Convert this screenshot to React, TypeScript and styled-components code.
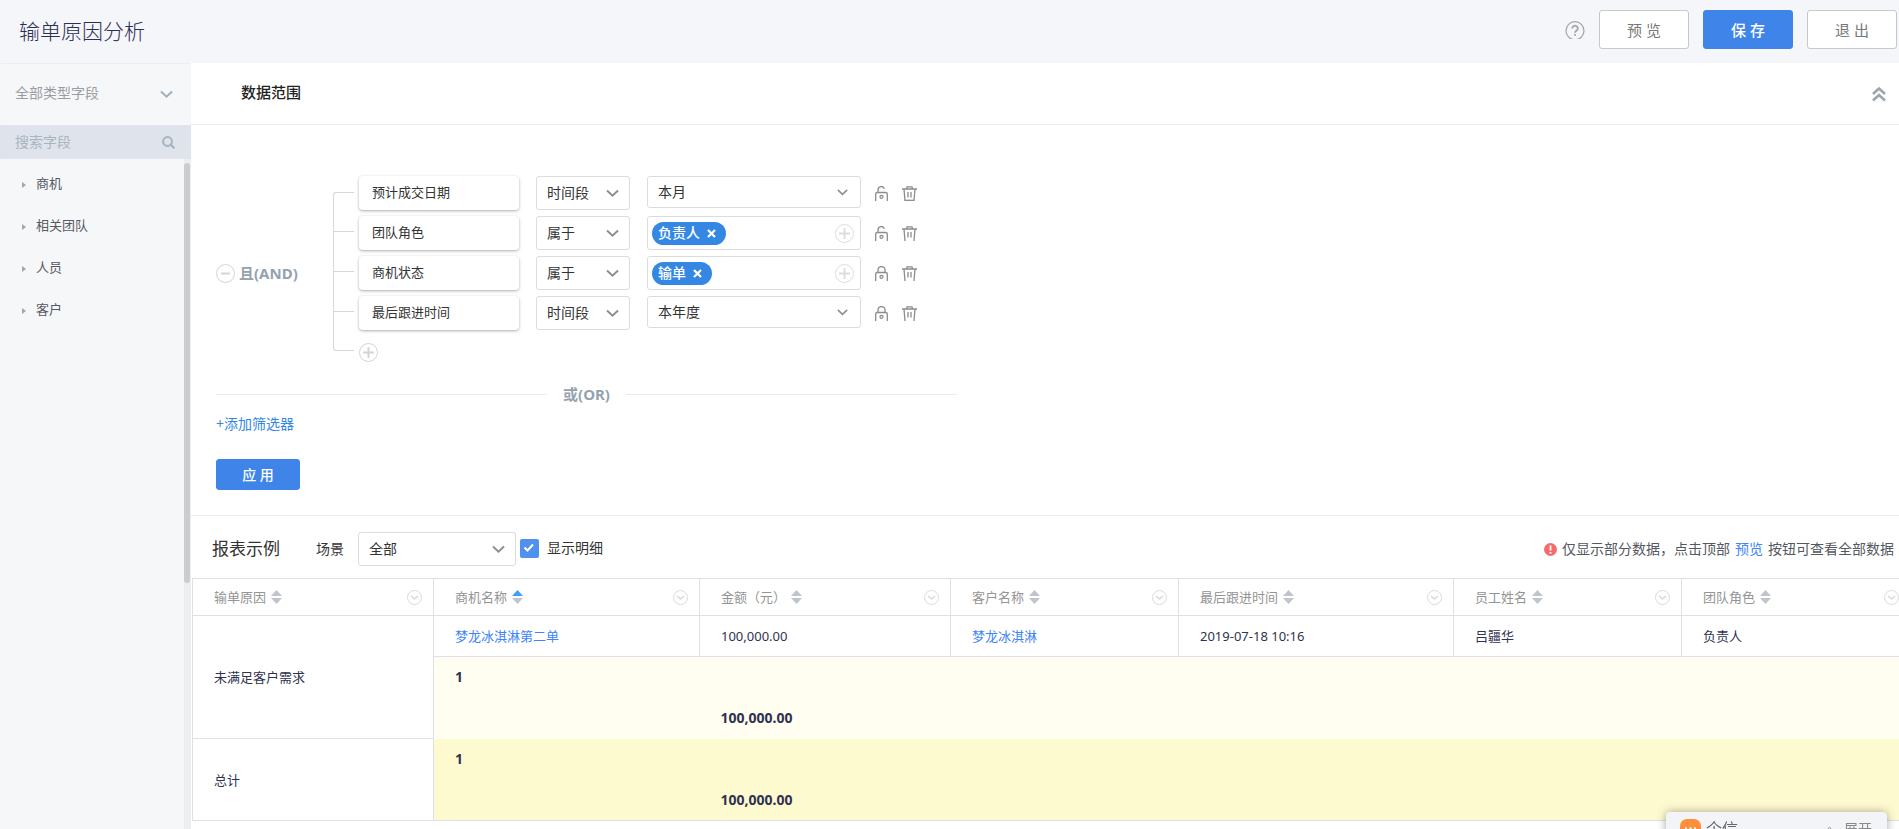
import React from 'react';
import styled, { createGlobalStyle, css } from 'styled-components';

const Global = createGlobalStyle`
  *, *::before, *::after { box-sizing: border-box; }
  body {
    margin: 0;
    background: #fff;
    overflow: hidden;
    color: #333;
    font: 14px/20px "Noto Sans", "Noto Sans CJK SC", sans-serif;
  }
  button, input, select { font: inherit; color: inherit; margin: 0; }
  button { cursor: pointer; }
  a { text-decoration: none; }
`;

const Page = styled.div`
  display: flex;
  flex-direction: column;
  min-height: 100vh;
`;

const Header = styled.header`
  display: flex;
  align-items: center;
  height: 63px;
  padding: 0 2px 4px 19px;
  background: #f5f6fa;
`;

const PageTitle = styled.h1`
  flex: 1;
  margin: 0;
  padding-top: 2px;
  font-size: 21px;
  line-height: 28px;
  font-weight: 300;
  color: #2b2f55;
`;

const PlainButton = styled.button`
  display: inline-flex;
  align-items: center;
  justify-content: center;
  padding: 0;
  border: 0;
  background: none;
`;

const HelpButton = styled(PlainButton)`
  margin: 1px 14px 0 0;
`;

const HeaderActions = styled.div`
  display: flex;
  gap: 14px;
`;

const ActionButton = styled.button<{ $primary?: boolean }>`
  width: 90px;
  height: 39px;
  padding: 0;
  border: 1px solid ${p => (p.$primary ? '#3f84e9' : '#c9c9c9')};
  border-radius: 3px;
  background: ${p => (p.$primary ? '#3f84e9' : '#fff')};
  color: ${p => (p.$primary ? '#fff' : '#777')};
  font-size: 15px;
  font-weight: ${p => (p.$primary ? 500 : 400)};
`;

const Body = styled.div`
  display: flex;
  flex: 1;
`;

const Sidebar = styled.aside`
  display: flex;
  flex-direction: column;
  flex: none;
  width: 191px;
  background: #f6f7f9;
  box-shadow: inset 0 1px 1px #eceef1;
`;

const SelectWrap = styled.span<{ $width?: number; $inset: number }>`
  position: relative;
  display: flex;
  flex: none;
  width: ${p => (p.$width ? `${p.$width}px` : '100%')};
  svg {
    position: absolute;
    right: ${p => p.$inset}px;
    top: 50%;
    transform: translateY(-50%);
    pointer-events: none;
  }
`;

const SelectBox = styled.select<{ $height?: number }>`
  appearance: none;
  width: 100%;
  height: ${p => p.$height ?? 34}px;
  padding: 0 30px 0 10px;
  border: 1px solid #dcdcdc;
  border-radius: 3px;
  background: #fff;
  outline: 0;
`;

const TypeSelect = styled(SelectBox)`
  height: 62px;
  padding: 0 30px 2px 15px;
  border: 0;
  background: transparent;
  color: #999da3;
`;

const SearchBar = styled.label`
  display: flex;
  align-items: center;
  height: 34px;
  padding: 0 16px 0 15px;
  background: #dfe4ec;
`;

const SearchInput = styled.input`
  flex: 1;
  min-width: 0;
  padding: 0;
  border: 0;
  outline: 0;
  background: transparent;
  &::placeholder { color: #a9b4c0; opacity: 1; }
`;

const TreeArea = styled.div`
  display: flex;
  flex: 1;
`;

const Tree = styled.ul`
  flex: 1;
  margin: 0;
  padding: 3px 0 0;
  list-style: none;
`;

const TreeItem = styled(PlainButton)`
  justify-content: flex-start;
  width: 100%;
  height: 42px;
  padding: 0 0 1px 22px;
  gap: 10px;
  font-size: 13px;
  color: #555a62;
  svg { margin-top: 4px; }
`;

const ScrollTrack = styled.div`
  width: 7px;
  padding-top: 4px;
  background: #eeeeee;
`;

const ScrollThumb = styled.div`
  width: 6px;
  height: 420px;
  border-radius: 3px;
  background: #cdcdcd;
`;

const Main = styled.main`
  flex: 1;
  min-width: 0;
  overflow: hidden;
`;

const PanelHead = styled.div`
  display: flex;
  align-items: center;
  justify-content: space-between;
  height: 62px;
  padding: 0 13px 4px 50px;
  border-bottom: 1px solid #ebebeb;
`;

const PanelTitle = styled.h2`
  margin: 0;
  font-size: 15px;
  line-height: 22px;
  font-weight: 500;
  color: #222;
`;

const CollapseButton = styled(PlainButton)`
  padding-top: 4px;
`;

const Filters = styled.section`
  padding: 51px 25px 25px;
  border-bottom: 1px solid #ebebeb;
`;

const FilterGroup = styled.div`
  display: flex;
  align-items: center;
`;

const AndLabel = styled.div`
  display: flex;
  align-items: center;
  gap: 4px;
  width: 117px;
  padding-top: 8px;
`;

const LogicText = styled.span`
  font-size: 15px;
  line-height: 20px;
  font-weight: 700;
  color: #94a2b0;
`;

const Bracket = styled.div`
  align-self: stretch;
  width: 21px;
  margin: 16px 5px 11px 0;
  border: 1px solid #d8d8d8;
  border-right: 0;
  border-radius: 3px 0 0 3px;
`;

const Tick = styled.div`
  height: 40px;
  border-bottom: 1px solid #d8d8d8;
  &:first-child { height: 39px; }
`;

const Rows = styled.div`
  display: flex;
  flex-direction: column;
  gap: 6px;
`;

const FilterRow = styled.div`
  display: flex;
  align-items: flex-start;
  height: 34px;
  gap: 17px;
`;

const FieldChip = styled.div`
  width: 160px;
  height: 34px;
  padding: 0 13px;
  border-radius: 4px;
  background: #fff;
  box-shadow: 0 1px 3px rgba(60, 70, 80, 0.45);
  font-size: 13px;
  line-height: 32px;
`;

const TagBox = styled.div`
  display: flex;
  align-items: center;
  justify-content: space-between;
  width: 214px;
  height: 34px;
  padding: 0 6px 0 4px;
  border: 1px solid #dcdcdc;
  border-radius: 3px;
`;

const Tag = styled.span`
  display: flex;
  align-items: center;
  height: 23px;
  gap: 7px;
  padding: 0 10px 0 6px;
  border-radius: 12px;
  background: #3488e4;
  color: #fff;
  font-weight: 500;
`;

const RowTools = styled.div`
  display: flex;
  gap: 14px;
  padding-top: 10px;
  margin-left: -3px;
`;

const AddRow = styled(PlainButton)`
  align-self: flex-start;
  margin-top: 7px;
`;

const OrDivider = styled.div`
  display: flex;
  align-items: center;
  gap: 16px;
  width: 741px;
  max-width: 100%;
  margin-top: 22px;
  &::before, &::after {
    content: "";
    flex: 1;
    height: 1px;
    background: #ebebeb;
  }
`;

const AddFilter = styled.a`
  display: block;
  width: max-content;
  margin-top: 10px;
  color: #3488e4;
`;

const ApplyButton = styled(ActionButton)`
  width: 84px;
  height: 31px;
  margin-top: 25px;
  font-size: 14px;
`;

const ReportBar = styled.div`
  display: flex;
  align-items: center;
  height: 62px;
  padding: 4px 5px 0 21px;
`;

const ReportTitle = styled.h2`
  margin: 0 36px 0 0;
  font-size: 17px;
  line-height: 24px;
  font-weight: 400;
`;

const SceneLabel = styled.label`
  margin-right: 14px;
`;

const DetailToggle = styled.label`
  display: flex;
  align-items: center;
  flex: 1;
  gap: 8px;
  margin-left: 4px;
  padding-bottom: 2px;
`;

const CheckCell = styled.span`
  position: relative;
  display: flex;
  svg { position: absolute; left: 3px; top: 4px; pointer-events: none; }
`;

const Check = styled.input`
  appearance: none;
  width: 19px;
  height: 19px;
  border-radius: 2px;
  background: #5090ef;
`;

const Notice = styled.p`
  display: flex;
  align-items: center;
  gap: 5px;
  margin: 0;
  color: #545861;
`;

const TextLink = styled.a`
  color: #4083fb;
`;

const Table = styled.table`
  width: 1718px;
  margin-left: 1px;
  table-layout: fixed;
  border-collapse: collapse;
  font-size: 13px;
  color: #2e3350;
`;

const cell = css`
  padding: 0 11px 0 21px;
  border: 1px solid #dde0e7;
  text-align: left;
  font-weight: 400;
`;

const Th = styled.th`
  ${cell}
  height: 37px;
  color: #949494;
`;

const Td = styled.td`
  ${cell}
  height: 41px;
`;

const SumTd = styled.td<{ $total?: boolean }>`
  height: 41px;
  padding: 0 21px;
  background: ${p => (p.$total ? '#fefad0' : '#fffef0')};
  font-size: 14px;
  font-weight: 700;
`;

const TableBody = styled.tbody`
  border-bottom: 1px solid #dde0e7;
`;

const ThInner = styled.div`
  display: flex;
  align-items: center;
  gap: 5px;
`;

const ColumnMenu = styled(PlainButton)`
  margin-left: auto;
`;

const Chat = styled.aside`
  position: fixed;
  right: 12px;
  bottom: -19px;
  display: flex;
  align-items: center;
  width: 221px;
  height: 36px;
  padding: 0 15px 2px 14px;
  border-radius: 4px 4px 0 0;
  background: #f3f4f7;
  box-shadow: 0 0 10px rgba(0, 0, 0, 0.35);
  color: #8a8a8a;
`;

const ChatName = styled.strong`
  flex: 1;
  margin-left: 5px;
  font-size: 16px;
  font-weight: 400;
  color: #666;
`;

const ChatToggle = styled(PlainButton)`
  gap: 10px;
`;

const Chevron = ({ size = 13, color = '#8f8f8f', weight = 2 }: { size?: number; color?: string; weight?: number }) => (
  <svg width={size} height={size} viewBox="0 0 13 13" fill="none" stroke={color} strokeWidth={weight} aria-hidden="true">
    <path d="M1 4l5.500 5.200L12 4" />
  </svg>
);

const Circle = ({ plus, color = '#d4d4d4' }: { plus?: boolean; color?: string }) => (
  <svg width="19" height="19" viewBox="0 0 19 19" fill="none" stroke={color} aria-hidden="true">
    <circle cx="9.500" cy="9.500" r="9" />
    <path d={plus ? 'M4 9.500h11M9.500 4v11' : 'M5 9.500h9'} strokeWidth="2" />
  </svg>
);

const Lock = ({ open }: { open?: boolean }) => (
  <svg width="13" height="15" viewBox="0 0 13 15" fill="none" stroke="#8c8c8c" strokeWidth="1.300" aria-hidden="true">
    <path d={open ? 'M3 6.500V4a3.300 3.300 0 0 1 6.400-1.200' : 'M3 6.500V4a3.500 3.500 0 0 1 7 0v2.500'} />
    <path d="M.7 15V8.200q0-1.700 1.700-1.700h8.200q1.700 0 1.700 1.700V15" />
    <circle cx="6.500" cy="10.800" r="1.500" />
  </svg>
);

const Trash = ({ full }: { full?: boolean }) => (
  <svg width="15" height="15" viewBox="0 0 15 15" fill="none" stroke="#8c8c8c" strokeWidth="1.300" aria-hidden="true">
    <path d="M0 3h15M4.500 3l.5-2.200h5l.5 2.200M2 3l1 12M13 3l-1 12M6 6v5.500M9 6v5.500" />
    {full && <path d="M3 14.300h9" />}
  </svg>
);

const Sort = ({ up }: { up?: boolean }) => (
  <svg width="11" height="14" viewBox="0 0 11 14" aria-hidden="true">
    <path d="M0 6l5.500-6L11 6z" fill={up ? '#409eff' : '#c0c4cc'} />
    <path d="M0 8l5.500 6L11 8z" fill="#c0c4cc" />
  </svg>
);

const MenuIcon = () => (
  <svg width="15" height="15" viewBox="0 0 15 15" fill="none" stroke="#dadada" aria-hidden="true">
    <circle cx="7.500" cy="7.500" r="7" />
    <path d="M4 6l3.500 3L11 6" strokeWidth="1.600" />
  </svg>
);

type Filter = { field: string; op: string; value?: string; tag?: string; open?: boolean };

const filters: Filter[] = [
  { field: '预计成交日期', op: '时间段', value: '本月', open: true },
  { field: '团队角色', op: '属于', tag: '负责人', open: true },
  { field: '商机状态', op: '属于', tag: '输单' },
  { field: '最后跟进时间', op: '时间段', value: '本年度' },
];

const columns = [
  { name: '输单原因', width: 241 },
  { name: '商机名称', width: 266, up: true },
  { name: '金额（元）', width: 251 },
  { name: '客户名称', width: 228 },
  { name: '最后跟进时间', width: 275 },
  { name: '员工姓名', width: 228 },
  { name: '团队角色', width: 229 },
];

const SumRows = ({ total, label }: { total?: boolean; label?: string }) => (
  <>
    <tr>
      {label && <Td rowSpan={2}>{label}</Td>}
      <SumTd $total={total}>1</SumTd>
      <SumTd $total={total} colSpan={5} />
    </tr>
    <tr>
      <SumTd $total={total} />
      <SumTd $total={total}>100,000.00</SumTd>
      <SumTd $total={total} colSpan={4} />
    </tr>
  </>
);

export default function App() {
  return (
    <Page>
      <Global />
      <Header>
        <PageTitle>输单原因分析</PageTitle>
        <HelpButton aria-label="帮助">
          <svg width="20" height="18" viewBox="0 0 20 18" fill="none" stroke="#a3a3a3" strokeWidth="1.200">
            <circle cx="10" cy="9.700" r="9" />
            <path d="M7.200 7.400a2.800 2.600 0 1 1 4.500 2c-1.100.8-1.700 1.200-1.700 2.300M10 13v1.700" strokeWidth="1.800" />
          </svg>
        </HelpButton>
        <HeaderActions>
          <ActionButton>预 览</ActionButton>
          <ActionButton $primary>保 存</ActionButton>
          <ActionButton>退 出</ActionButton>
        </HeaderActions>
      </Header>
      <Body>
        <Sidebar>
          <SelectWrap $inset={18}>
            <TypeSelect aria-label="字段类型"><option>全部类型字段</option></TypeSelect>
            <Chevron color="#a3aeb9" />
          </SelectWrap>
          <SearchBar>
            <SearchInput placeholder="搜索字段" aria-label="搜索字段" />
            <svg width="13" height="13" viewBox="0 0 13 13" fill="none" stroke="#a6b2be" strokeWidth="2">
              <circle cx="5.500" cy="5.500" r="4.400" />
              <path d="M8.800 8.800l3.600 3.600" />
            </svg>
          </SearchBar>
          <TreeArea>
            <Tree>
              {['商机', '相关团队', '人员', '客户'].map(name => (
                <li key={name}>
                  <TreeItem>
                    <svg width="4" height="6" viewBox="0 0 4 6"><path d="M0 0l4 3-4 3z" fill="#9aa9b5" /></svg>
                    {name}
                  </TreeItem>
                </li>
              ))}
            </Tree>
            <ScrollTrack><ScrollThumb /></ScrollTrack>
          </TreeArea>
        </Sidebar>
        <Main>
          <PanelHead>
            <PanelTitle>数据范围</PanelTitle>
            <CollapseButton aria-label="收起">
              <svg width="14" height="16" viewBox="0 0 14 16" fill="none" stroke="#9aa7b0" strokeWidth="2.600">
                <path d="M1 8l6-5.500L13 8M1 14.500L7 9l6 5.500" />
              </svg>
            </CollapseButton>
          </PanelHead>
          <Filters>
            <FilterGroup>
              <AndLabel>
                <PlainButton aria-label="删除条件组"><Circle /></PlainButton>
                <LogicText>且(AND)</LogicText>
              </AndLabel>
              <Bracket><Tick /><Tick /><Tick /></Bracket>
              <Rows>
                {filters.map((f, i) => (
                  <FilterRow key={f.field}>
                    <FieldChip>{f.field}</FieldChip>
                    <SelectWrap $width={94} $inset={11}>
                      <SelectBox aria-label={`${f.field}条件`}><option>{f.op}</option></SelectBox>
                      <Chevron />
                    </SelectWrap>
                    {f.tag ? (
                      <TagBox>
                        <Tag>
                          {f.tag}
                          <PlainButton aria-label="移除">
                            <svg width="9" height="9" viewBox="0 0 9 9" stroke="#fff" strokeWidth="2.200"><path d="M1 1l7 7M8 1L1 8" /></svg>
                          </PlainButton>
                        </Tag>
                        <PlainButton aria-label="添加"><Circle plus color="#dedede" /></PlainButton>
                      </TagBox>
                    ) : (
                      <SelectWrap $width={214} $inset={13}>
                        <SelectBox $height={32} aria-label={`${f.field}取值`}><option>{f.value}</option></SelectBox>
                        <Chevron size={11} />
                      </SelectWrap>
                    )}
                    <RowTools>
                      <PlainButton aria-label="锁定"><Lock open={f.open} /></PlainButton>
                      <PlainButton aria-label="删除"><Trash full={i === 0} /></PlainButton>
                    </RowTools>
                  </FilterRow>
                ))}
                <AddRow aria-label="添加条件"><Circle plus /></AddRow>
              </Rows>
            </FilterGroup>
            <OrDivider><LogicText>或(OR)</LogicText></OrDivider>
            <AddFilter href="#">+添加筛选器</AddFilter>
            <ApplyButton $primary>应 用</ApplyButton>
          </Filters>
          <ReportBar>
            <ReportTitle>报表示例</ReportTitle>
            <SceneLabel htmlFor="scene">场景</SceneLabel>
            <SelectWrap $width={158} $inset={11}>
              <SelectBox id="scene"><option>全部</option></SelectBox>
              <Chevron />
            </SelectWrap>
            <DetailToggle>
              <CheckCell>
                <Check type="checkbox" defaultChecked />
                <svg width="12" height="10" viewBox="0 0 12 10" fill="none" stroke="#fff" strokeWidth="2"><path d="M1.500 4.500l3 3 5.500-6" /></svg>
              </CheckCell>
              显示明细
            </DetailToggle>
            <Notice>
              <svg width="13" height="13" viewBox="0 0 13 13">
                <circle cx="6.500" cy="6.500" r="6.500" fill="#f56c6c" />
                <path d="M6.500 2.500v5M6.500 9v1.700" stroke="#fff" strokeWidth="1.800" />
              </svg>
              <span>仅显示部分数据，点击顶部</span>
              <TextLink href="#">预览</TextLink>
              <span>按钮可查看全部数据</span>
            </Notice>
          </ReportBar>
          <Table>
            <colgroup>
              {columns.map(c => <col key={c.name} style={{ width: c.width }} />)}
            </colgroup>
            <thead>
              <tr>
                {columns.map(c => (
                  <Th key={c.name} scope="col">
                    <ThInner>
                      {c.name}
                      <PlainButton aria-label="排序"><Sort up={c.up} /></PlainButton>
                      <ColumnMenu aria-label="列菜单"><MenuIcon /></ColumnMenu>
                    </ThInner>
                  </Th>
                ))}
              </tr>
            </thead>
            <TableBody>
              <tr>
                <Td rowSpan={3}>未满足客户需求</Td>
                <Td><TextLink href="#">梦龙冰淇淋第二单</TextLink></Td>
                <Td>100,000.00</Td>
                <Td><TextLink href="#">梦龙冰淇淋</TextLink></Td>
                <Td>2019-07-18 10:16</Td>
                <Td>吕疆华</Td>
                <Td>负责人</Td>
              </tr>
              <SumRows />
              <SumRows total label="总计" />
            </TableBody>
          </Table>
        </Main>
      </Body>
      <Chat>
        <svg width="21" height="21" viewBox="0 0 21 21">
          <rect width="21" height="21" rx="7" fill="#ff8f3a" />
          <path d="M5 9.500h2M9.500 9.500h2M14 9.500h2" stroke="#fff" strokeWidth="2" />
        </svg>
        <ChatName>企信</ChatName>
        <ChatToggle>
          <svg width="9" height="7" viewBox="0 0 9 7" fill="none" stroke="#999"><path d="M.5 6l4-5 4 5" /></svg>
          展开
        </ChatToggle>
      </Chat>
    </Page>
  );
}
